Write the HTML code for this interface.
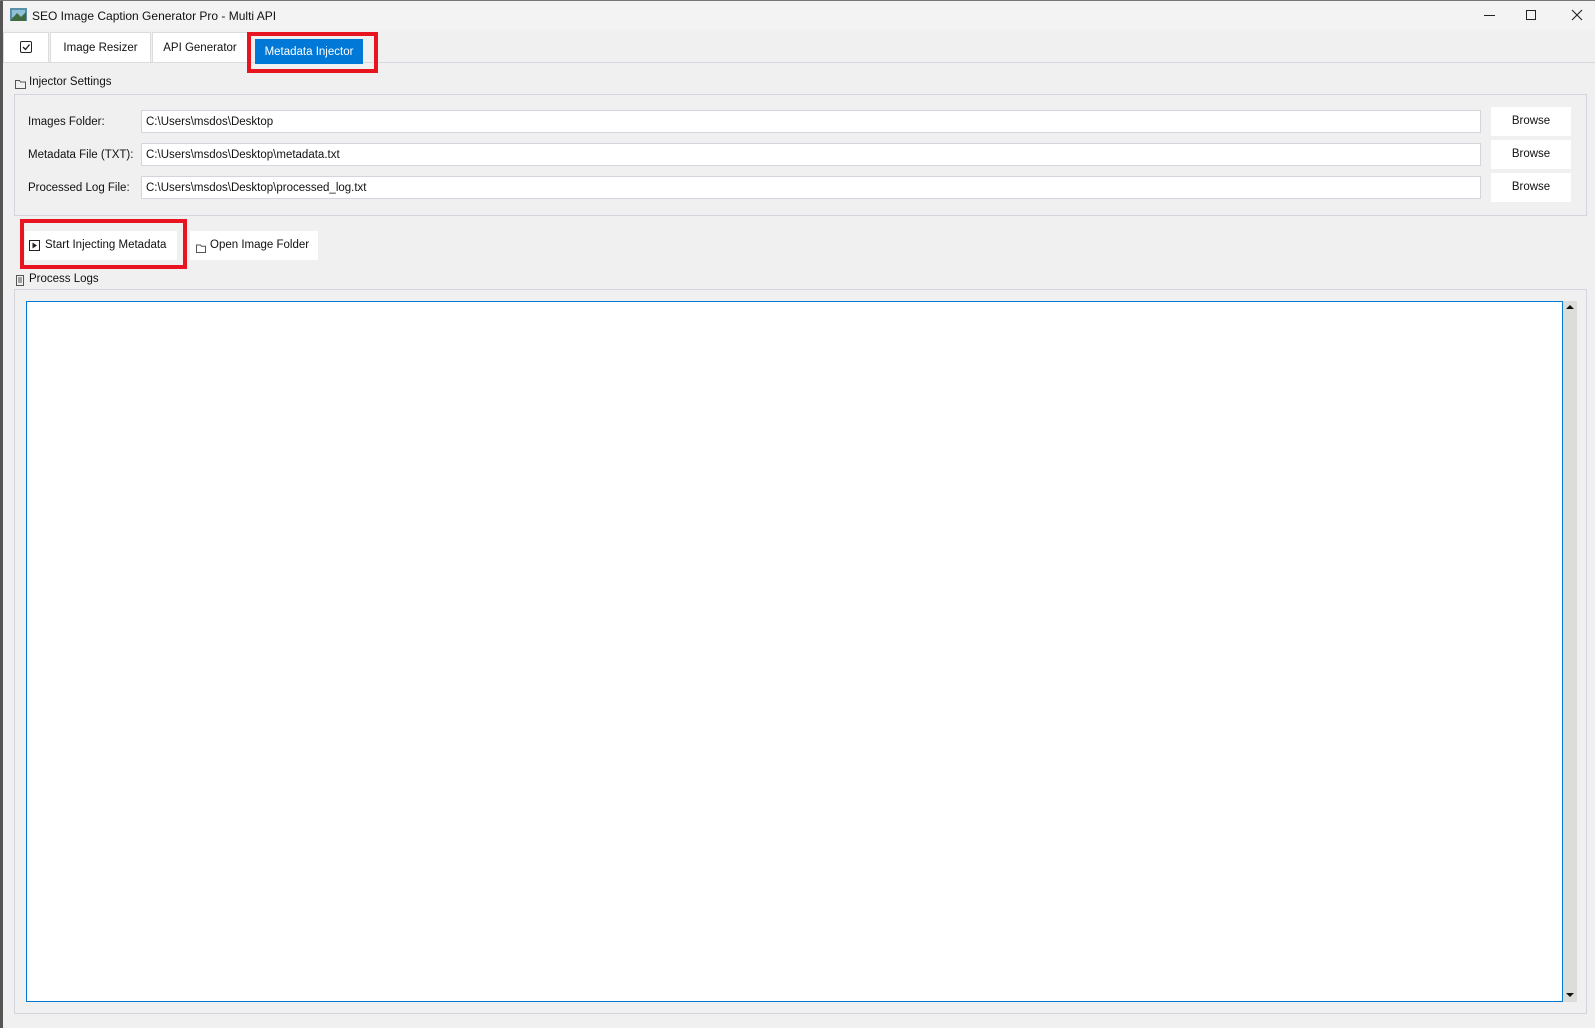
<!DOCTYPE html>
<html><head><meta charset="utf-8"><style>
*{box-sizing:border-box;margin:0;padding:0}
body{width:1595px;height:1028px;background:#f0f0f0;font-family:"Liberation Sans",sans-serif;font-size:11.5px;color:#111;position:relative;overflow:hidden}
.a{position:absolute}
.btn{position:absolute;background:#fff;text-align:center;line-height:29px;font-size:11.5px}
.inp{position:absolute;background:#fff;border:1px solid #d4d4dc;height:23px;line-height:22px;padding-left:4px;font-size:11.5px}
.lbl{position:absolute;font-size:11.5px}
</style></head><body>
<div class="a" style="left:0;top:0;width:3px;height:1028px;background:#555"></div>
<div class="a" style="left:0;top:0;width:1595px;height:1px;background:#777"></div>
<div class="a" style="left:3px;top:1px;width:1592px;height:29px;background:#f3f3f3"></div>
<svg class="a" style="left:10px;top:7px" width="17" height="15"><rect x="0" y="1" width="17" height="13" fill="#5a8fa8"/><rect x="2" y="3" width="13" height="7" fill="#8fc0d8"/><path d="M1 13 L7 6 L11 10 L16 5 L16 14 L1 14Z" fill="#3f6b3f"/></svg>
<div class="lbl" style="left:32px;top:9px;font-size:12px">SEO Image Caption Generator Pro - Multi API</div>
<div class="a" style="left:1484px;top:15px;width:11px;height:1px;background:#222"></div>
<div class="a" style="left:1526px;top:10px;width:10px;height:10px;border:1px solid #222"></div>
<svg class="a" style="left:1571px;top:9px" width="12" height="12"><path d="M1 1L11 11M11 1L1 11" stroke="#222" stroke-width="1.1"/></svg>
<div class="a" style="left:3px;top:62px;width:1592px;height:1px;background:#d8d8e0"></div>
<div class="a" style="left:3px;top:32px;width:46px;height:31px;background:#fff;border:1px solid #dcdcdc"></div>
<div class="a" style="left:20px;top:41px;width:12px;height:12px;border:1.5px solid #222;border-radius:2px"></div>
<svg class="a" style="left:20px;top:41px" width="12" height="12"><path d="M3 6L5.5 8.5L9.5 3.5" stroke="#222" stroke-width="1.4" fill="none"/></svg>
<div class="a" style="left:50px;top:32px;width:101px;height:31px;background:#fff;border:1px solid #dcdcdc;text-align:center;line-height:31px">Image Resizer</div>
<div class="a" style="left:152px;top:32px;width:96px;height:31px;background:#fff;border:1px solid #dcdcdc;text-align:center;line-height:31px">API Generator</div>
<div class="a" style="left:247px;top:32px;width:131px;height:41px;border:4px solid #e8141f"></div>
<div class="a" style="left:255px;top:39px;width:108px;height:25px;background:#0078d7;color:#fff;text-align:center;line-height:26px">Metadata Injector</div>
<svg class="a" style="left:15px;top:79px" width="11" height="10"><path d="M0.5 1.5h4l1 1.5h5v6.5h-10z" fill="none" stroke="#555"/></svg>
<div class="lbl" style="left:29px;top:76px">Injector Settings</div>
<div class="a" style="left:14px;top:94px;width:1573px;height:122px;border:1px solid #d4d4dc"></div>
<div class="lbl" style="left:28px;top:116px">Images Folder:</div>
<div class="lbl" style="left:28px;top:149px">Metadata File (TXT):</div>
<div class="lbl" style="left:28px;top:182px">Processed Log File:</div>
<div class="inp" style="left:141px;top:110px;width:1340px">C:\Users\msdos\Desktop</div>
<div class="inp" style="left:141px;top:143px;width:1340px">C:\Users\msdos\Desktop\metadata.txt</div>
<div class="inp" style="left:141px;top:176px;width:1340px">C:\Users\msdos\Desktop\processed_log.txt</div>
<div class="btn" style="left:1491px;top:107px;width:80px">Browse</div>
<div class="btn" style="left:1491px;top:140px;width:80px">Browse</div>
<div class="btn" style="left:1491px;top:173px;width:80px">Browse</div>
<div class="btn" style="left:25px;top:231px;width:152px;padding-left:20px;text-align:left">Start Injecting Metadata</div>
<svg class="a" style="left:29px;top:240px" width="11" height="11"><rect x="0.5" y="0.5" width="10" height="10" fill="none" stroke="#222"/><path d="M3.5 2.5L8 5.5L3.5 8.5Z" fill="#222"/></svg>
<div class="a" style="left:20px;top:219px;width:167px;height:50px;border:4px solid #e8141f"></div>
<div class="btn" style="left:190px;top:231px;width:128px;padding-left:20px;text-align:left">Open Image Folder</div>
<svg class="a" style="left:196px;top:244px" width="11" height="9"><path d="M0.5 1h4l1 1.2h4v6.3h-9z" fill="none" stroke="#555"/></svg>
<svg class="a" style="left:16px;top:275px" width="8" height="11"><rect x="0.5" y="0.5" width="7" height="10" fill="none" stroke="#555"/><path d="M2 3h4M2 5h4M2 7h4" stroke="#555"/></svg>
<div class="lbl" style="left:29px;top:273px">Process Logs</div>
<div class="a" style="left:14px;top:289px;width:1573px;height:725px;border:1px solid #d4d4dc"></div>
<div class="a" style="left:26px;top:301px;width:1537px;height:701px;background:#fff;border:1px solid #0078d7"></div>
<div class="a" style="left:1563px;top:301px;width:14px;height:701px;background:#dcdcd8"></div>
<svg class="a" style="left:1564px;top:303px" width="12" height="8"><path d="M2 6L6 2L10 6Z" fill="#111"/></svg>
<svg class="a" style="left:1564px;top:991px" width="12" height="8"><path d="M2 2L6 6L10 2Z" fill="#111"/></svg>
</body></html>
